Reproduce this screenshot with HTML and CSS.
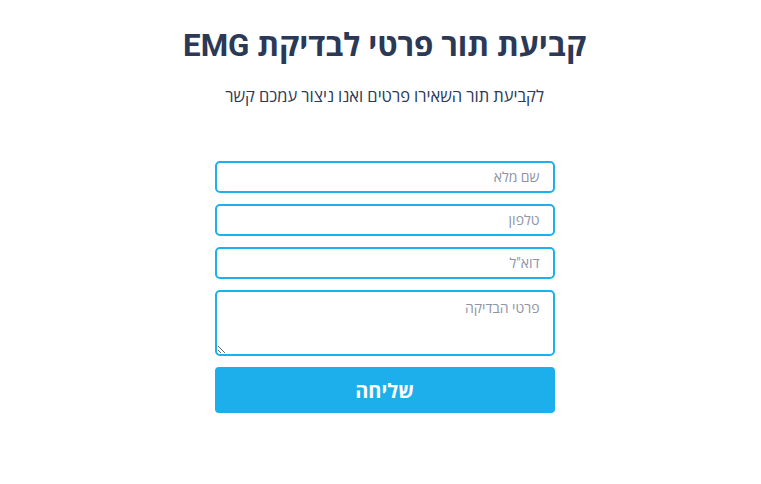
FILE: index.html
```html
<!DOCTYPE html>
<html lang="he" dir="rtl">
<head>
<meta charset="utf-8">
<link rel="stylesheet" href="styles.css">
</head>
<body>
<main class="page">
  <h1 class="title">קביעת תור פרטי לבדיקת EMG</h1>
  <p class="subtitle">לקביעת תור השאירו פרטים ואנו ניצור עמכם קשר</p>
  <form class="form">
    <input class="field" type="text" placeholder="שם מלא">
    <input class="field" type="text" placeholder="טלפון">
    <input class="field" type="text" placeholder="דוא&quot;ל">
    <textarea class="field area" placeholder="פרטי הבדיקה"></textarea>
    <button class="submit" type="button">שליחה</button>
  </form>
</main>
</body>
</html>
```
FILE: styles.css
```css
html, body { margin: 0; padding: 0; background: #fff; }
body { font-family: Roboto, "Noto Sans", "Open Sans", sans-serif; }
.page { display: flex; flex-direction: column; align-items: center; padding: 26px 0 0 8px; }
.title { margin: 0; font-size: 31.3px; font-weight: 700; color: #2b3856; line-height: 40px; }
.subtitle { margin: 21px 0 0; font-size: 16.5px; color: #2b3856; line-height: 20px; }
.form { margin-top: 54px; width: 340px; display: flex; flex-direction: column; gap: 11px; }
.field { box-sizing: border-box; width: 100%; height: 32px; border: 2px solid #1cb0ec; border-radius: 5px; padding: 0 13px; font-family: inherit; font-size: 14px; color: #333; background: #fff; outline: none; }
.field::placeholder { color: #8e93a6; }
.area { height: 66px; padding: 6px 13px; resize: vertical; display: block; }
.submit { height: 46px; border: none; border-radius: 4px; background: #1cafec; color: #fff; font-family: inherit; font-size: 20px; font-weight: 700; cursor: pointer; }
```
